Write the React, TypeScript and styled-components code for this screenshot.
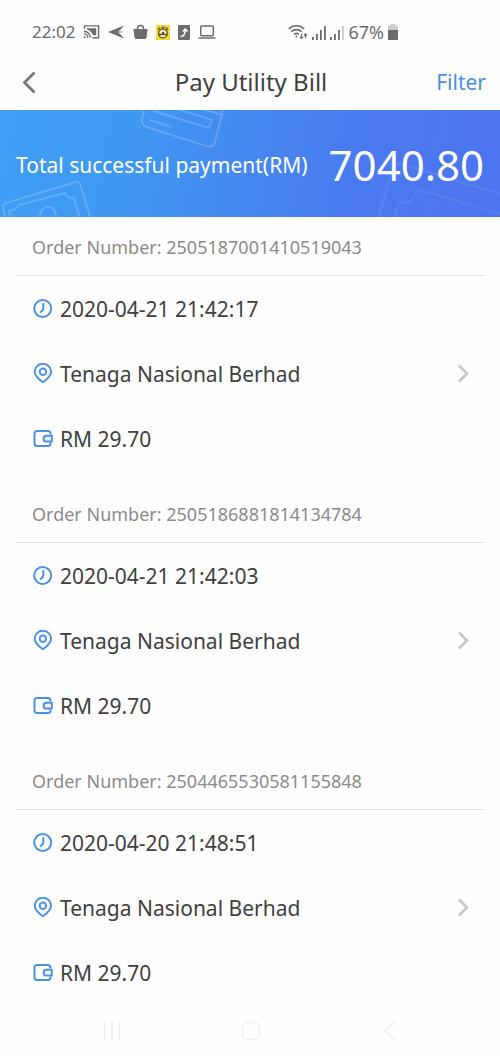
import React from "react";
import styled, { createGlobalStyle } from "styled-components";

const GlobalStyle = createGlobalStyle`
  * { box-sizing: border-box; }
  body { margin: 0; background: #fefefe; font-family: "Noto Sans", "Open Sans", sans-serif; color: #404040; }
  h1, h2, p { margin: 0; font-weight: 400; }
  button { border: 0; padding: 0; background: none; font: inherit; cursor: pointer; }
  svg { display: block; }
`;

const Screen = styled.div`
  min-height: 100vh;
  display: flex;
  flex-direction: column;
`;

const StatusBar = styled.header`
  display: flex;
  align-items: center;
  justify-content: space-between;
  height: 64px;
  padding: 0 102px 0 32px;
  color: #6c6c6c;
  line-height: 24px;
`;

const StatusGroup = styled.div<{ $gap: number }>`
  display: flex;
  align-items: center;
  gap: ${(p) => p.$gap}px;
`;

const StatusText = styled.span<{ $size: number }>`
  font-size: ${(p) => p.$size}px;
`;

const NavBar = styled.nav`
  display: grid;
  grid-template-columns: 80px 1fr 80px;
  align-items: center;
  height: 46px;
  padding: 0 14px 10px 16px;
`;

const BackButton = styled.button`
  justify-self: start;
  color: #777;
`;

const Title = styled.h1`
  text-align: center;
  font-size: 24px;
  line-height: 32px;
`;

const FilterButton = styled.button`
  justify-self: end;
  color: #4a90dc;
  font-size: 21px;
  line-height: 32px;
`;

const Banner = styled.section`
  position: relative;
  overflow: hidden;
  display: flex;
  align-items: center;
  justify-content: space-between;
  height: 107px;
  padding: 3px 16px 0;
  color: #fff;
  background: linear-gradient(100deg, #3f9df3 0%, #3f99f2 25%, #4a7af0 70%, #4b74ee 100%);
`;

const Artwork = styled.svg<{ $side: "left" | "right"; $opacity: number }>`
  position: absolute;
  top: 0;
  ${(p) => p.$side}: 0;
  opacity: ${(p) => p.$opacity};
  fill: none;
  stroke: #fff;
`;

const BannerLabel = styled.p`
  position: relative;
  font-size: 21px;
  line-height: 32px;
  white-space: nowrap;
`;

const BannerTotal = styled.p`
  position: relative;
  font-size: 42px;
  line-height: 56px;
`;

const Orders = styled.main`
  flex: 1;
  display: flex;
  flex-direction: column;
  gap: 13px;
  padding: 0 16px;
`;

const OrderCard = styled.article``;

const OrderNumber = styled.h2`
  padding: 18px 16px 15px;
  border-bottom: 1px solid #e2e2e2;
  color: #8b8b8b;
  font-size: 18px;
  line-height: 25px;
`;

const OrderBody = styled.button`
  display: flex;
  align-items: center;
  justify-content: space-between;
  width: 100%;
  padding: 0 14px 0 16px;
  color: #404040;
  text-align: left;
`;

const Row = styled.span`
  display: flex;
  align-items: center;
  gap: 6px;
  height: 65px;
  font-size: 21px;
  line-height: 32px;
  white-space: nowrap;
`;

const SystemBar = styled.footer`
  display: grid;
  grid-template-columns: repeat(3, 1fr);
  justify-items: center;
  align-items: center;
  height: 51px;
  padding: 0 40px 0 42px;
  color: #f3f3f3;
`;

const ClockIcon = () => (
  <svg width="22" height="22" viewBox="0 0 22 22" fill="none" stroke="#4a92e6" strokeWidth="2" strokeLinecap="round" aria-hidden="true">
    <circle cx="10.7" cy="10.500" r="8.500" />
    <path d="M11.300 6v4.200c0 1.600-.8 2.700-2.500 3.700" />
  </svg>
);

const PinIcon = () => (
  <svg width="22" height="22" viewBox="0 0 22 22" fill="none" stroke="#4a92e6" strokeWidth="2" aria-hidden="true">
    <path d="M10.900 19.300C8 17.200 2.700 13.200 2.700 8.700a8.200 7.900 0 0 1 16.400 0c0 4.500-5.300 8.500-8.200 10.600z" strokeLinejoin="round" />
    <circle cx="10.900" cy="8.800" r="3.200" />
  </svg>
);

const WalletIcon = () => (
  <svg width="22" height="22" viewBox="0 0 22 22" fill="none" stroke="#4a92e6" strokeWidth="2" strokeLinejoin="round" aria-hidden="true">
    <path d="M18.500 6.500V5.500a2.500 2.500 0 0 0-2.500-2.500H5a2.500 2.500 0 0 0-2.500 2.500v10A2.500 2.500 0 0 0 5 18h11a2.500 2.500 0 0 0 2.500-2.500v-1" />
    <path d="M19.800 7.800h-5.300a2.900 2.900 0 0 0 0 5.800h5.300z" />
  </svg>
);

const ChevronRight = () => (
  <svg width="14" height="22" viewBox="0 0 14 22" fill="none" stroke="#c6c6c6" strokeWidth="2.600" aria-hidden="true">
    <path d="M3 2.500l8 8-8 8" />
  </svg>
);

const CastIcon = () => (
  <svg width="17" height="16" viewBox="0 0 18 16" fill="none" stroke="currentColor" strokeWidth="1.500" aria-hidden="true">
    <path d="M1.500 4.500V1.500h15v12.500H10" />
    <path d="M4 4h10v7.500h-3.500C9.500 8 7.500 6 4 5z" fill="currentColor" stroke="none" />
    <path d="M1 7.200a7 7 0 0 1 7 7M1 10a4.200 4.200 0 0 1 4.200 4.200" />
    <circle cx="1.800" cy="13.500" r="1" fill="currentColor" stroke="none" />
  </svg>
);

const PlaneIcon = () => (
  <svg width="17" height="14" viewBox="0 0 17 14" fill="currentColor" aria-hidden="true">
    <path d="M0 7L16 .5l-3.500 4.300L10 6.200l6.500.8-6.500.8 2.500 1.400L16 13.500z" />
  </svg>
);

const BagIcon = () => (
  <svg width="15" height="16" viewBox="0 0 16 16" aria-hidden="true">
    <path d="M4.800 6V4a3.200 3 0 0 1 6.400 0v2" fill="none" stroke="currentColor" strokeWidth="1.600" />
    <path d="M.5 4.800h15l-1 8.500a2.200 2.200 0 0 1-2.200 2.200H3.700a2.200 2.200 0 0 1-2.200-2.200z" fill="currentColor" />
  </svg>
);

const TimerIcon = () => (
  <svg width="14" height="15" viewBox="0 0 14 15" aria-hidden="true">
    <rect width="14" height="15" fill="#f3d92f" />
    <circle cx="7" cy="8.500" r="4.300" fill="#fff6c0" stroke="#54502f" strokeWidth="1.300" />
    <path d="M2 5l2-2.500M12 5l-2-2.500M5.500 2.500h3M3 9.500h8" stroke="#54502f" strokeWidth="1.300" />
    <circle cx="7" cy="8" r="1.300" fill="#54502f" />
  </svg>
);

const PhoneAppIcon = () => (
  <svg width="12" height="15" viewBox="0 0 12 15" aria-hidden="true">
    <rect width="12" height="15" rx="1" fill="currentColor" />
    <path d="M2.500 11.500c3 0 4.500-1.500 4.500-6M4.800 6.500L7.200 4l2.300 2.500" fill="none" stroke="#fff" strokeWidth="1.500" />
  </svg>
);

const LaptopIcon = () => (
  <svg width="18" height="14" viewBox="0 0 18 14" fill="none" stroke="currentColor" strokeWidth="1.500" aria-hidden="true">
    <rect x="2.700" y="1" width="12.600" height="9.800" rx="1" />
    <path d="M.5 13h17" />
  </svg>
);

const WifiIcon = () => (
  <svg width="20" height="16" viewBox="0 0 20 16" fill="none" stroke="currentColor" strokeWidth="1.600" aria-hidden="true">
    <path d="M.8 5a10.800 10.800 0 0 1 15.400 0M3.300 7.800a7.200 7.200 0 0 1 10.400 0M6 10.500a3.600 3.600 0 0 1 5 0" />
    <circle cx="8.500" cy="12.500" r="1" fill="currentColor" stroke="none" />
    <path d="M13.500 10v4.300M11.900 12.800l1.600 1.600 1.600-1.600M17.500 14.300V10M15.900 11.500l1.600-1.600 1.600 1.600" strokeWidth="1.200" />
  </svg>
);

const SignalIcon = ({ level }: { level: number }) => (
  <svg width="14" height="15" viewBox="0 0 14 15" fill="currentColor" aria-hidden="true">
    {[3, 6, 10, 14].map((h, i) => (
      <rect key={h} x={i * 4} y={15 - h} width="1.800" height={h} opacity={i < level ? 1 : 0.35} />
    ))}
  </svg>
);

const BatteryIcon = () => (
  <svg width="10" height="16" viewBox="0 0 11 16" preserveAspectRatio="none" fill="currentColor" aria-hidden="true">
    <path d="M3 0h5v1.500h2a1 1 0 0 1 1 1V6H0V2.500a1 1 0 0 1 1-1h2z" opacity="0.350" />
    <path d="M0 6h11v9a1 1 0 0 1-1 1H1a1 1 0 0 1-1-1z" />
  </svg>
);

const orders = [
  { number: "2505187001410519043", time: "2020-04-21 21:42:17", payee: "Tenaga Nasional Berhad", amount: "RM 29.70" },
  { number: "2505186881814134784", time: "2020-04-21 21:42:03", payee: "Tenaga Nasional Berhad", amount: "RM 29.70" },
  { number: "2504465530581155848", time: "2020-04-20 21:48:51", payee: "Tenaga Nasional Berhad", amount: "RM 29.70" },
];

export default function App() {
  return (
    <Screen>
      <GlobalStyle />
      <StatusBar>
        <StatusGroup $gap={8}>
          <StatusText $size={17}>22:02</StatusText>
          <CastIcon />
          <PlaneIcon />
          <BagIcon />
          <TimerIcon />
          <PhoneAppIcon />
          <LaptopIcon />
        </StatusGroup>
        <StatusGroup $gap={4}>
          <WifiIcon />
          <SignalIcon level={4} />
          <SignalIcon level={3} />
          <StatusText $size={18}>67%</StatusText>
          <BatteryIcon />
        </StatusGroup>
      </StatusBar>

      <NavBar>
        <BackButton aria-label="Back">
          <svg width="24" height="24" viewBox="0 0 24 24" fill="none" stroke="currentColor" strokeWidth="2.800">
            <path d="M18.500 2.500L8.500 12.500l10 10" />
          </svg>
        </BackButton>
        <Title>Pay Utility Bill</Title>
        <FilterButton>Filter</FilterButton>
      </NavBar>

      <Banner>
        <Artwork $side="left" $opacity={0.17} width="240" height="107" strokeWidth="2" aria-hidden="true">
          <path d="M144 0l-2 9q-1 6 5 8l59 19q7 2 9-4L223 0" />
          <path d="M153 1l56 17 3-8-35-11M150 10l22 7M198-2l25 7" />
          <path d="M6 110L3 97q0-3 3-4L76 72q3-1 4 2l11 36" />
          <path d="M11 110l-2-9q7-1 10-6l46-12q2 6 9 5l6 22" />
          <circle cx="48" cy="105" r="8" />
        </Artwork>
        <Artwork $side="right" $opacity={0.06} width="130" height="107" strokeWidth="2.500" aria-hidden="true">
          <path d="M8 108l15-50q2-6 8-4l100 30" />
          <path d="M25 108l4-16q11 2 14-4 2-6 8-8l80 24" />
        </Artwork>
        <BannerLabel>Total successful payment(RM)</BannerLabel>
        <BannerTotal>7040.80</BannerTotal>
      </Banner>

      <Orders>
        {orders.map((order) => (
          <OrderCard key={order.number}>
            <OrderNumber>Order Number: {order.number}</OrderNumber>
            <OrderBody>
              <span>
                <Row><ClockIcon />{order.time}</Row>
                <Row><PinIcon />{order.payee}</Row>
                <Row><WalletIcon />{order.amount}</Row>
              </span>
              <ChevronRight />
            </OrderBody>
          </OrderCard>
        ))}
      </Orders>

      <SystemBar>
        <svg width="20" height="20" viewBox="0 0 20 20" stroke="currentColor" strokeWidth="2" aria-hidden="true">
          <path d="M3 1v18M10 1v18M17 1v18" />
        </svg>
        <svg width="20" height="20" viewBox="0 0 20 20" fill="none" stroke="currentColor" strokeWidth="2" aria-hidden="true">
          <rect x="1.500" y="1.500" width="17" height="17" rx="5" />
        </svg>
        <svg width="20" height="20" viewBox="0 0 20 20" fill="none" stroke="currentColor" strokeWidth="2" aria-hidden="true">
          <path d="M15 1L5 10l10 9" />
        </svg>
      </SystemBar>
    </Screen>
  );
}
